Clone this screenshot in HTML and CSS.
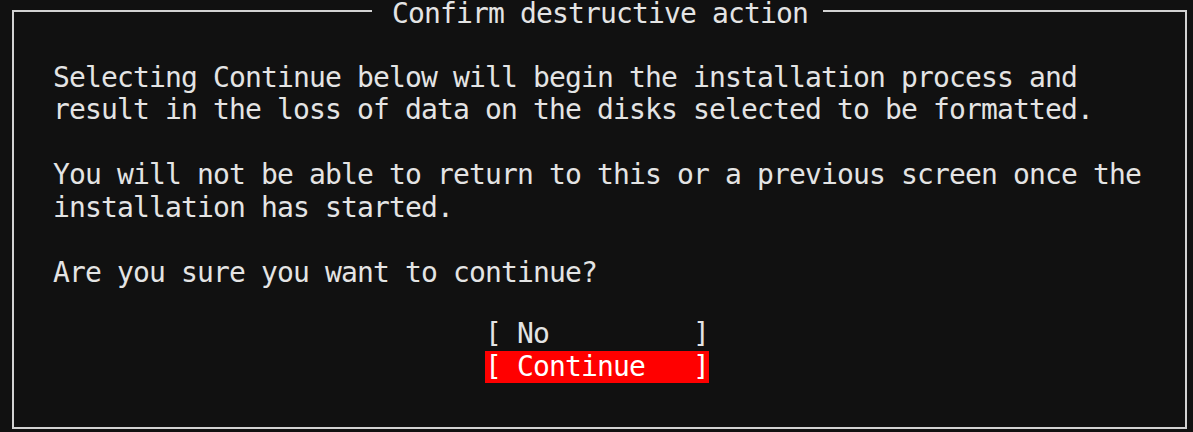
FILE: index.html
```html
<!DOCTYPE html>
<html>
<head>
<meta charset="utf-8">
<link rel="stylesheet" href="styles.css">
</head>
<body>
<div class="dialog">
  <div class="title">Confirm destructive action</div>
  <div class="para">Selecting Continue below will begin the installation process and
result in the loss of data on the disks selected to be formatted.</div>
  <div class="para">You will not be able to return to this or a previous screen once the
installation has started.</div>
  <div class="para para-last">Are you sure you want to continue?</div>
  <div class="buttons">
    <div class="btn">[ No         ]</div>
    <div class="btn btn-focus">[ Continue   ]</div>
  </div>
</div>
</body>
</html>
```
FILE: styles.css
```css
html, body {
  margin: 0;
  padding: 0;
  background: #111111;
}
body {
  width: 1193px;
  height: 432px;
  overflow: hidden;
  font-family: "DejaVu Sans Mono", "Liberation Mono", monospace;
  font-size: 28px;
  letter-spacing: -0.857px;
  line-height: 32.6px;
  color: #e4e4e4;
}
.dialog {
  position: relative;
  box-sizing: border-box;
  margin: 10px 0 0 12px;
  width: 1175px;
  height: 419px;
  border: 2px solid #d2d2d2;
  padding: 49.5px 0 0 39px;
}
.title {
  position: absolute;
  top: -8px;
  left: 358px;
  padding: 0 15px 0 20px;
  line-height: 20px;
  background: #111111;
  white-space: pre;
}
.para {
  white-space: pre;
  margin-bottom: 32.6px;
}
.para-last {
  margin-bottom: 28.6px;
}
.buttons {
  margin-left: 432px;
  width: 224px;
}
.btn {
  white-space: pre;
}
.btn-focus {
  background: #ff0000;
  color: #ffffff;
}
```
